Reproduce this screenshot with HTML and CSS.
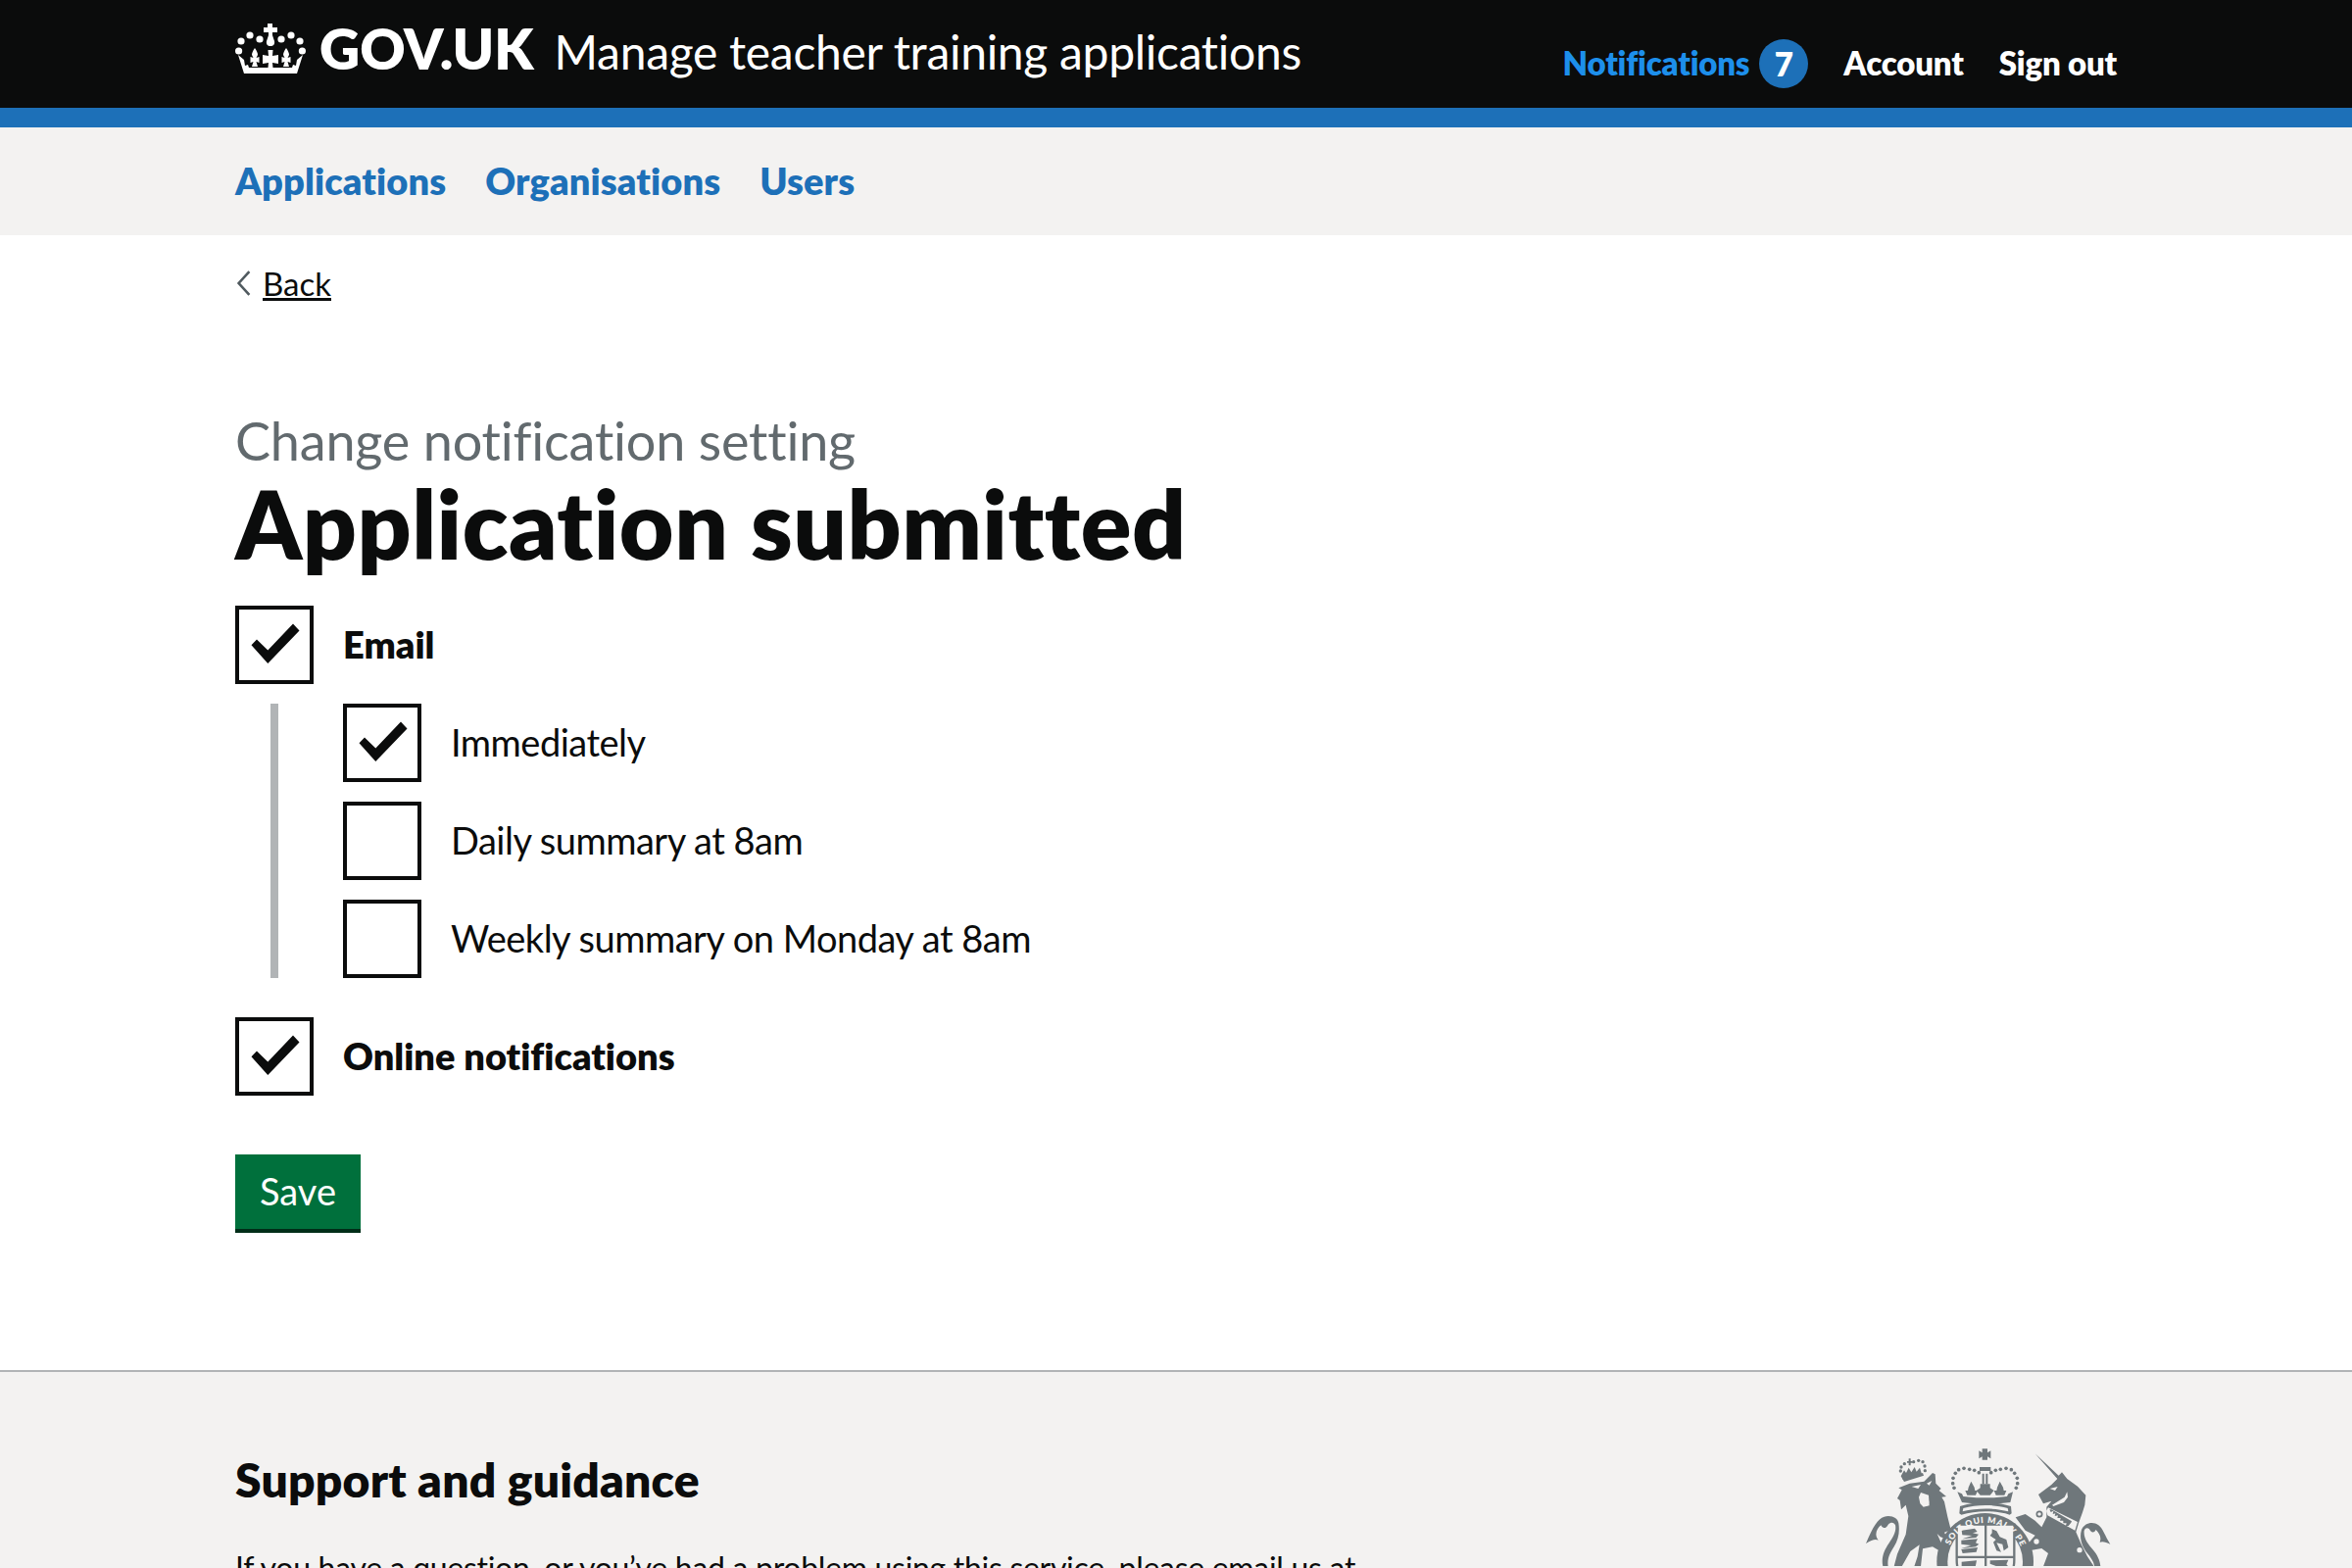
FILE: index.html
```html
<!DOCTYPE html>
<html lang="en">
<head>
<meta charset="utf-8">
<title>Change notification setting - Manage teacher training applications</title>
<link rel="stylesheet" href="styles.css">
</head>
<body>
<header class="header">
  <div class="wrap header-row">
    <a class="brand" href="#">
      <svg class="crown" viewBox="0 0 72 52" aria-hidden="true">
        <g fill="#fff">
          <path d="M33 0h5v4h5v5h-5v3l2 6c.6 3-1 5-4 5s-4.600-2-4-5l2-6V9h-5V4h4z"/>
          <circle cx="15" cy="12" r="3.600"/><circle cx="6" cy="18" r="3.600"/><circle cx="3.600" cy="28" r="3.600"/><circle cx="25" cy="16" r="3.600"/>
          <circle cx="47" cy="16" r="3.600"/><circle cx="57" cy="12" r="3.600"/><circle cx="66" cy="18" r="3.600"/><circle cx="68.400" cy="28" r="3.600"/>
          <path d="M33.500 27h5l-.5 6 6-1v9l-6-1 .5 5h-5l.5-5-6 1v-9l6 1z"/>
          <path d="M20 25c2 3 3 5 3 7l-1.500 3 3-1v6l-3-1 1.500 5h-6l1.500-5-3 1v-6l3 1-1.500-3c0-2 1-4 3-7z"/>
          <path d="M52 25c2 3 3 5 3 7l-1.500 3 3-1v6l-3-1 1.500 5h-6l1.500-5-3 1v-6l3 1-1.500-3c0-2 1-4 3-7z"/>
          <path d="M3 32l6 5 1 6 3-1 1 3h44l1-3 3 1 1-6 6-5-6 19H9z"/>
        </g>
      </svg>
      <span class="brand-name">GOV.UK</span>
      <span class="service">Manage teacher training applications</span>
    </a>
    <nav class="account">
      <a class="account-link notifications" href="#">Notifications</a>
      <span class="badge">7</span>
      <a class="account-link acc" href="#">Account</a>
      <a class="account-link" href="#">Sign out</a>
    </nav>
  </div>
</header>

<nav class="primary">
  <div class="wrap primary-row">
    <a href="#">Applications</a>
    <a href="#">Organisations</a>
    <a href="#">Users</a>
  </div>
</nav>

<main class="wrap main">
  <a class="back" href="#"><svg class="chev" viewBox="0 0 14 26" aria-hidden="true"><path d="M12 2L2 13l10 11" fill="none" stroke="#505a5f" stroke-width="2.400"/></svg><span>Back</span></a>
  <form class="form">
    <span class="caption">Change notification setting</span>
    <h1 class="title">Application submitted</h1>

    <div class="check">
      <span class="box"><svg class="tick" viewBox="4 4 72 72" aria-hidden="true"><path d="M16.500 40.300L33.300 59 65.500 25.500 59 18.500 33.300 45.500 22 34.500z"/></svg></span>
      <span class="label bold">Email</span>
    </div>
    <div class="sub">
      <div class="check">
        <span class="box"><svg class="tick" viewBox="4 4 72 72" aria-hidden="true"><path d="M16.500 40.300L33.300 59 65.500 25.500 59 18.500 33.300 45.500 22 34.500z"/></svg></span>
        <span class="label">Immediately</span>
      </div>
      <div class="check">
        <span class="box"></span>
        <span class="label">Daily summary at 8am</span>
      </div>
      <div class="check">
        <span class="box"></span>
        <span class="label">Weekly summary on Monday at 8am</span>
      </div>
    </div>
    <div class="check">
      <span class="box"><svg class="tick" viewBox="4 4 72 72" aria-hidden="true"><path d="M16.500 40.300L33.300 59 65.500 25.500 59 18.500 33.300 45.500 22 34.500z"/></svg></span>
      <span class="label bold">Online notifications</span>
    </div>
    <button class="save" type="button">Save</button>
  </form>
</main>

<footer class="footer">
  <div class="wrap footer-row">
    <div class="support">
      <h2 class="support-title">Support and guidance</h2>
      <p class="support-text">If you have a question, or you’ve had a problem using this service, please email us at</p>
    </div>
    <svg class="crest" viewBox="120 80 771 369" aria-hidden="true">
      <defs>
        <path id="garter" d="M379 435A118 118 0 0 1 615 435"/>
      </defs>
      <g fill="#6f777b">
        <g>
          <circle cx="238" cy="158" r="5"/><circle cx="240" cy="146" r="5"/><circle cx="250" cy="136" r="5"/><circle cx="278" cy="130" r="5"/><circle cx="293" cy="126" r="5"/><circle cx="306" cy="130" r="5"/><circle cx="312" cy="143" r="5"/><circle cx="313" cy="157" r="5"/>
          <path d="M258 128h5v-8h6v8h5v5h-5v8h-6v-8h-5z"/>
          <path d="M241 170l8-14 6 8 8-16 8 14 10-16 6 14 10-12 6 20-58 16-6-10z"/>
          <path d="M244 182l62-18 3 8-60 19z"/>
        </g>
        <path d="M232 210l34-14 44-6 26-26 8 4 2 28 16 16-6 6 22 18-14 2 8 14 10 46 10 40-20 8 12 22-24-8-10-10 26 60 10 40H280l10-30 6-36-28 20-26 46h-24l10-38 26-60 8-56-8-34-14 14-4-28-8-6 14-26z"/>
        <path fill="#f3f2f1" d="M272 206l28-6-8 12zM318 196l16-8-8 14zM300 224l24 8 2 32-18 4-10-10-4-20z"/>
        <circle cx="314" cy="254" r="11" fill="#f3f2f1"/>
        <path fill="#f3f2f1" d="M306 396l30-6 18 10 12-12 14 28-30 34h-50z"/>
        <path d="M232 318c-2-16-22-26-44-20-20 6-34 30-56 82 18-12 30-14 38-10-14-18-4-36 8-46 6 12 16 10 22-2 8-8 18-8 22 2 4 18-6 36-20 56-14 20-24 44-18 70h16c-4-22 6-42 18-60 14-22 18-48 14-72z"/>

        <path d="M650 105L722 172 732 162 748 182 780 205 805 232 802 262 795 285 783 318 775 345 790 380 810 420 830 450H675L690 410 670 395 640 400 620 390 650 355 620 340 590 300 620 290 650 310 670 330 685 300 685 268 700 250 675 258 660 230 700 200 718 182z"/>
        <path fill="#f3f2f1" d="M695 212l24-6-8 12zM702 262l38-24 8-16 2 16-12 16-32 12zM690 270l90 44-8 26-84-46-4-14z"/>
        <path d="M694 276l4 8 8-4-2 10 8-2-2 8 10-2-2 8h10l-2 8h10v8h10l-2 8h8l8-10 2-4-62-36z"/>
        <circle cx="663" cy="290" r="8" fill="none" stroke="#6f777b" stroke-width="5"/>
        <circle cx="654" cy="374" r="8" fill="#f3f2f1"/><circle cx="786" cy="400" r="8" fill="#f3f2f1"/>
        <path d="M792 338c8-20 34-28 52-14 14 10 20 34 36 58-12-6-24-10-32-6 6-16-2-28-12-38-6 12-16 8-20-2-6-6-14-4-16 6-2 22 12 40 28 58 12 14 22 34 22 52h-18c-2-16-12-30-24-44-14-18-24-44-16-70z"/>

        <circle cx="497" cy="435" r="148"/>
        <circle cx="497" cy="435" r="115" fill="#f3f2f1"/>
        <path d="M410 322h176v108c0 60-44 100-88 122-44-22-88-62-88-122z" fill="#f3f2f1" stroke="#6f777b" stroke-width="7"/>
        <path d="M495 322h7v230h-7zM410 418h176v7H410z"/>
        <path d="M425 340l40-6 8 10-14 4 18 4-8 10-42 4 30-10-30-2zM424 370l50-4-6 12 10 4-10 8-46 6 32-10-30-4zM424 398l50-6-4 14-42 4z"/>
        <path d="M518 336l14 6 10 18 20 8 6 24-14 10-4-20-18-4 14 28-14-4-10-26 8-8-18-12 6-8z"/>
        <path d="M425 436l46-4-4 20-42 4zM424 462l50-2v12l-48 6z"/>
        <path d="M512 432l56-2-6 14 6 6-40 6 34 4-2 10-48 6 24-10-22-8 24-6-26-10z"/>
        <text class="garter-text"><textPath href="#garter" startOffset="50">SOIT QUI MAL Y PE</textPath></text>

        <path d="M488 90h16v12l10-6v24l-10-6v10h-16v-10l-10 6V96l10 6z"/>
        <path d="M480 146h34v12h-34zM488 166h6v32h-6zM499 166h6v32h-6z"/>
        <circle cx="432" cy="150" r="5.500"/><circle cx="449" cy="153" r="5.500"/><circle cx="464" cy="156" r="5.500"/><circle cx="416" cy="154" r="5.500"/><circle cx="406" cy="165" r="5.500"/><circle cx="399" cy="180" r="5.500"/><circle cx="398" cy="196" r="5.500"/><circle cx="402" cy="210" r="5.500"/><circle cx="478" cy="163" r="5.500"/>
        <circle cx="561" cy="150" r="5.500"/><circle cx="544" cy="153" r="5.500"/><circle cx="529" cy="156" r="5.500"/><circle cx="577" cy="154" r="5.500"/><circle cx="587" cy="165" r="5.500"/><circle cx="595" cy="180" r="5.500"/><circle cx="596" cy="196" r="5.500"/><circle cx="592" cy="210" r="5.500"/><circle cx="515" cy="163" r="5.500"/>
        <path d="M454 190l10 18 2 10h8l-6 14h-26l-6-14h8l2-10z"/>
        <path d="M542 190l10 18 2 10h8l-6 14h-26l-6-14h8l2-10z"/>
        <path d="M482 198h30v12l12 8-12 14h-30l-12-14 12-8z"/>
        <path d="M412 222l14 6 4 8 40 4h54l40-4 4-8 14-6-8 32-74 8-74-8z"/>
        <path d="M420 266c50-16 106-16 156 0l2 22-6 4c-46-14-102-14-148 0l-6-4z"/>
        <path fill="#f3f2f1" d="M430 272c42-12 94-12 136 0l2 10c-42-11-96-11-140 0z"/>
      </g>
    </svg>
  </div>
</footer>
</body>
</html>
```

FILE: styles.css
```css
* { box-sizing: border-box; }
html, body { margin: 0; padding: 0; }
body {
  font-family: "Lato", "Noto Sans", sans-serif;
  font-variant-ligatures: none;
  color: #0b0c0c;
  background: #fff;
  font-size: 38px;
}
a { color: inherit; }
.wrap { width: 1920px; margin: 0 auto; }

.header { height: 130px; background: #0b0c0c; border-bottom: 20px solid #1d70b8; color: #fff; }
.header-row { display: flex; justify-content: space-between; height: 110px; }
.brand { display: flex; align-items: center; height: 100px; color: #fff; text-decoration: none; }
.crown { width: 72px; height: 52px; margin-right: 14px; }
.brand-name { font-size: 57px; font-weight: 800; margin-right: 21px; padding-bottom: 2px; }
.service { font-size: 48px; letter-spacing: -0.3px; padding-top: 4px; }
.account { display: flex; align-items: center; height: 110px; padding-top: 18px; }
.account-link { font-size: 33px; font-weight: 800; letter-spacing: -0.2px; color: #fff; text-decoration: none; }
.notifications { color: #1d8feb; }
.badge {
  width: 50px; height: 50px; margin: 2px 36px 0 10px; border-radius: 50%;
  background: #1d70b8; color: #fff; font-size: 33px; font-weight: 800;
  display: flex; align-items: center; justify-content: center;
}
.acc { margin-right: 36px; }

.primary { height: 110px; background: #f3f2f1; }
.primary-row { display: flex; align-items: center; gap: 40px; height: 110px; padding-bottom: 2px; font-size: 38px; font-weight: 800; letter-spacing: 0.1px; }
.primary-row a { color: #1d70b8; text-decoration: none; }

.main { padding-top: 30px; }
.back { display: flex; width: fit-content; align-items: center; gap: 11px; font-size: 33px; text-decoration: underline; line-height: 38px; padding-bottom: 2px; color: #0b0c0c; }
.chev { width: 16px; height: 28px; margin-left: 1px; }
.form { display: flex; flex-direction: column; align-items: flex-start; margin-top: 110px; padding-bottom: 140px; }
.caption { font-size: 54px; line-height: 60px; letter-spacing: -0.2px; color: #626a6e; }
.title { margin: 0 0 30px; font-size: 96px; line-height: 108px; font-weight: 800; letter-spacing: 0.5px; }
.check { display: flex; align-items: center; gap: 30px; height: 80px; }
.box { width: 80px; height: 80px; border: 4px solid #0b0c0c; display: flex; align-items: center; justify-content: center; flex: none; }
.tick { width: 72px; height: 72px; fill: #0b0c0c; }
.label { font-size: 38px; letter-spacing: -0.5px; padding-bottom: 2px; }
.bold { font-weight: 800; letter-spacing: 0; }
.sub { display: flex; flex-direction: column; gap: 20px; margin: 20px 0 40px 36px; padding-left: 66px; border-left: 8px solid #b1b4b6; }
.save {
  margin-top: 60px; width: 128px; height: 80px; border: 0; background: #00703c; color: #fff;
  font: inherit; font-size: 38px; box-shadow: inset 0 -4px 0 #002d18; padding: 0 0 6px;
}

.footer { background: #f3f2f1; border-top: 2px solid #b1b4b6; }
.footer-row { display: flex; justify-content: space-between; padding-top: 80px; padding-bottom: 60px; }
.support { width: 1200px; }
.support-title { margin: 0 0 40px; font-size: 48px; line-height: 60px; font-weight: 800; letter-spacing: 0.2px; }
.support-text { margin: 0; font-size: 32px; line-height: 40px; letter-spacing: -0.3px; }
.crest { width: 257px; height: 123px; margin: -5px 3px 0 0; overflow: hidden; }
.garter-text { font-size: 26px; font-weight: 800; fill: #f3f2f1; letter-spacing: 2.400px; }
```
